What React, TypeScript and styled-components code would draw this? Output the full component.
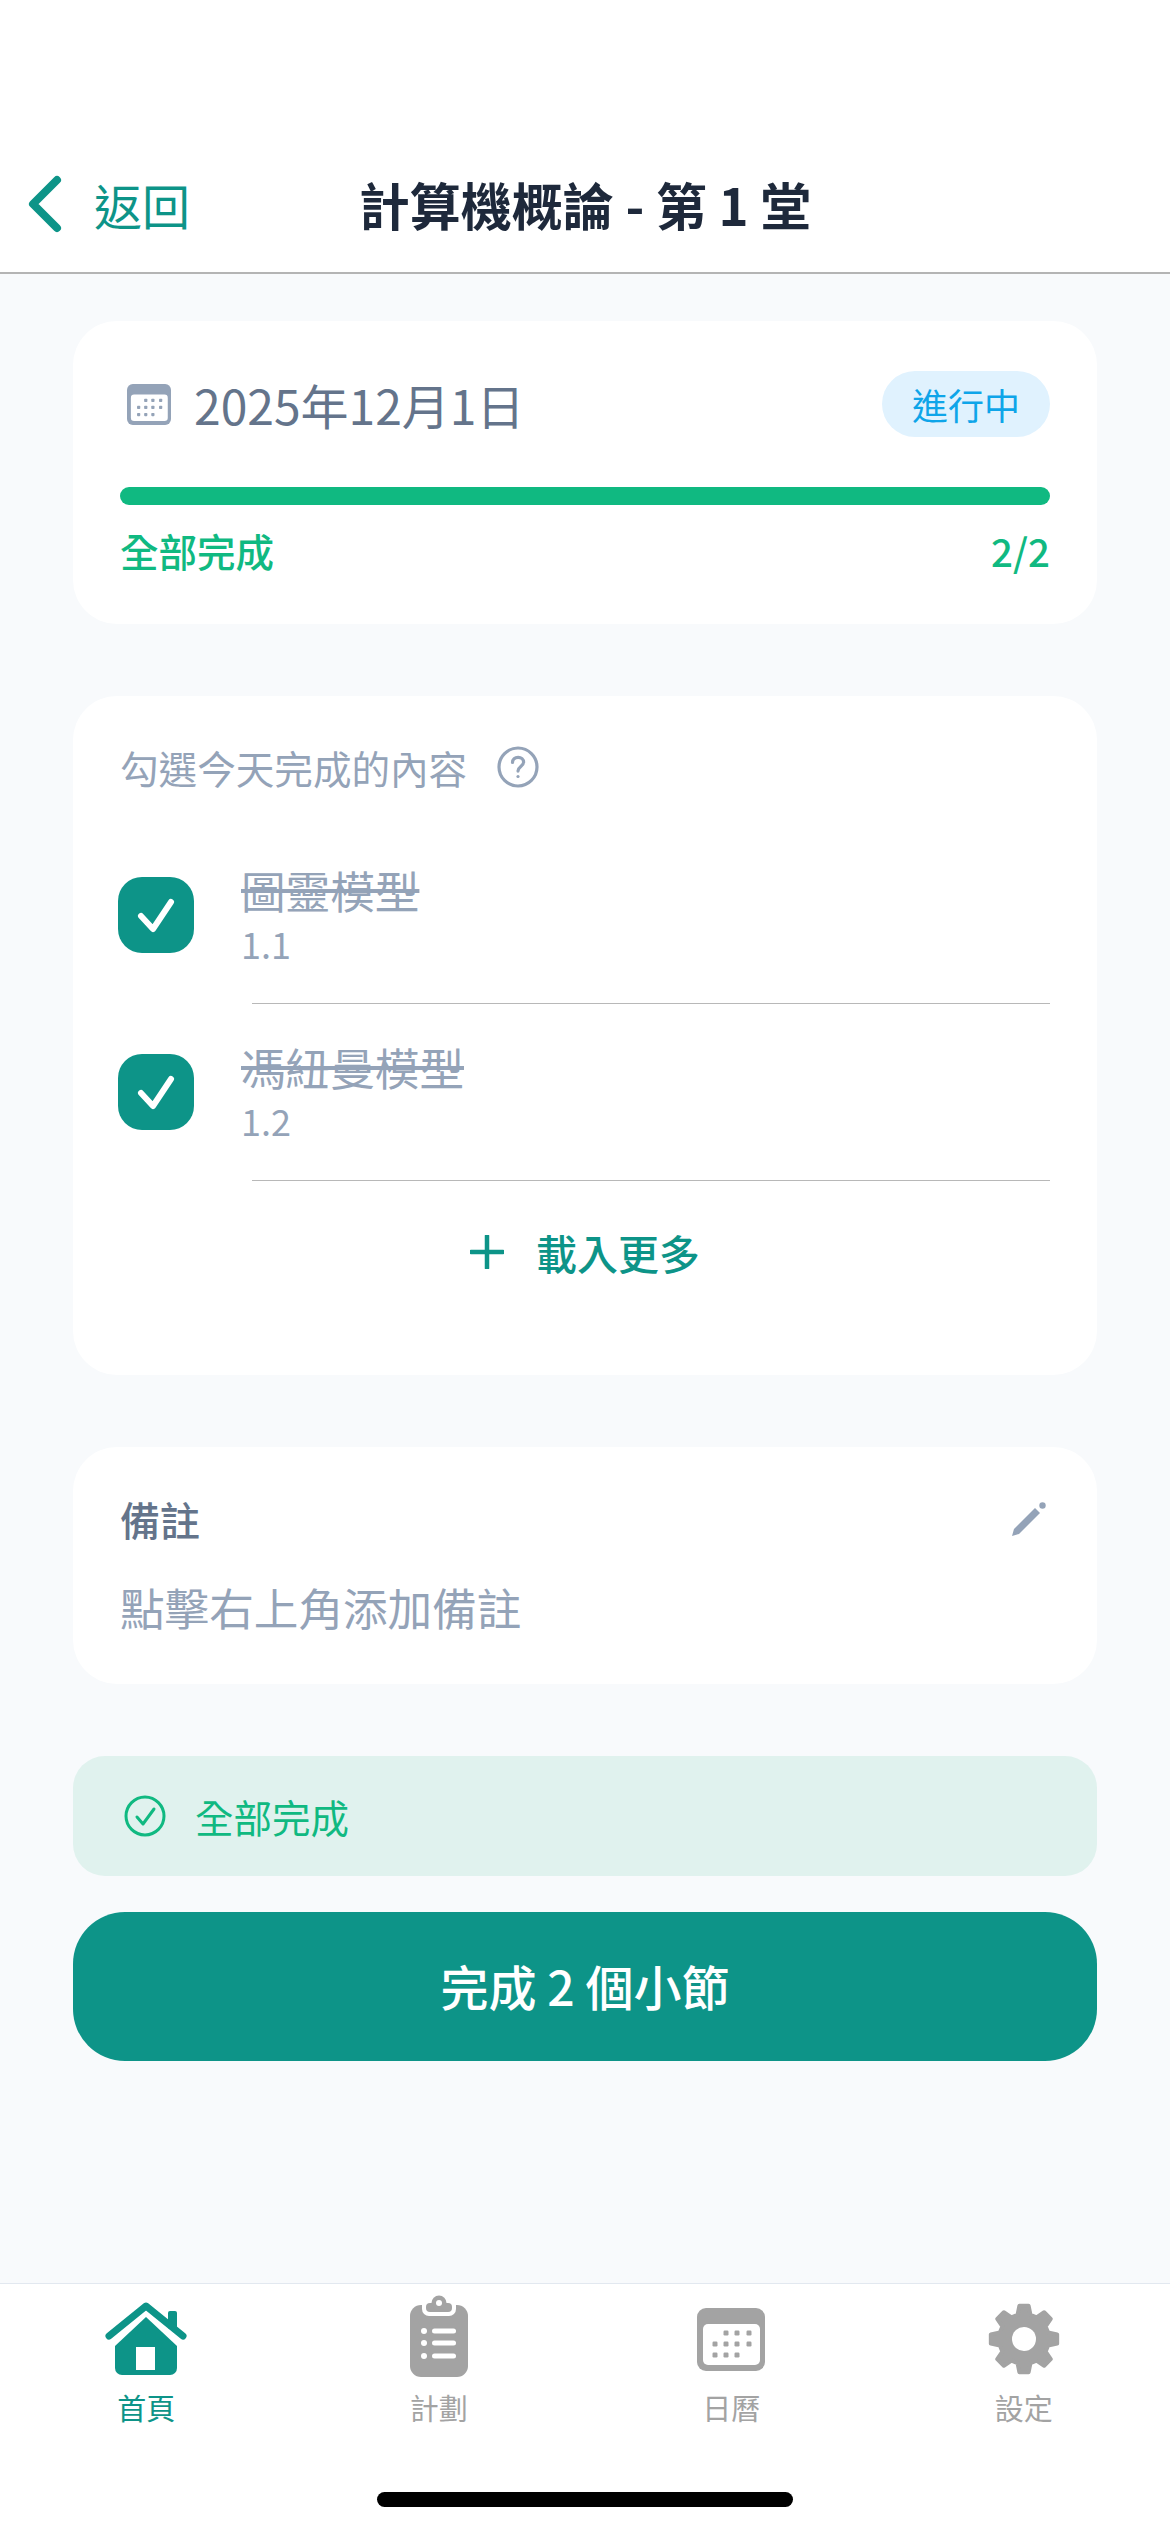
import React from "react";
import styled, { createGlobalStyle } from "styled-components";

const TEAL = "#0d9488";
const GREEN = "#10b981";
const SLATE = "#94a3b8";
const NAV_GREY = "#a3a3a3";

const GlobalStyle = createGlobalStyle`
  html, body {
    margin: 0;
    padding: 0;
    background: #f8fafc;
  }
  body {
    font-family: "Noto Sans CJK TC", "Noto Sans", sans-serif;
  }
  * {
    box-sizing: border-box;
  }
`;

const Page = styled.div`
  display: flex;
  flex-direction: column;
  width: 1170px;
  height: 2532px;
  overflow: hidden;
  background: #f8fafc;
`;

const Header = styled.header`
  display: grid;
  grid-template-columns: 1fr auto 1fr;
  align-items: center;
  height: 274px;
  padding-top: 136px;
  background: #fff;
  border-bottom: 2px solid #b4b4b4;
`;

const BackLink = styled.div`
  display: flex;
  align-items: center;
  gap: 32px;
  height: 132px;
  padding-left: 28px;
  font-size: 48px;
  color: ${TEAL};
`;

const Title = styled.h1`
  margin: 0;
  font-size: 51px;
  font-weight: 700;
  color: #1e293b;
`;

const Main = styled.main`
  flex: 1;
  display: flex;
  flex-direction: column;
  padding: 47px 73px 0;
`;

const Card = styled.section`
  background: #fff;
  border-radius: 44px;
  margin-bottom: 72px;
`;

const ProgressCard = styled(Card)`
  padding: 50px 47px 50px;
`;

const DateRow = styled.div`
  display: flex;
  align-items: center;
  justify-content: space-between;
  height: 66px;
`;

const DateLabel = styled.div`
  display: flex;
  align-items: center;
  gap: 23px;
  padding-left: 7px;
  font-size: 48px;
  color: #64748b;
`;

const Badge = styled.span`
  display: flex;
  align-items: center;
  justify-content: center;
  width: 168px;
  height: 66px;
  border-radius: 33px;
  background: #e0f2fe;
  color: #0ea5e9;
  font-size: 36px;
`;

const Track = styled.div`
  height: 18px;
  margin-top: 50px;
  border-radius: 9px;
  background: ${GREEN};
`;

const ProgressFoot = styled.div`
  display: flex;
  justify-content: space-between;
  margin-top: 21px;
  font-size: 38.5px;
  line-height: 48px;
  font-weight: 500;
  color: ${GREEN};
`;

const ChecklistCard = styled(Card)`
  padding: 48px 47px 90px;
`;

const ChecklistHead = styled.div`
  display: flex;
  align-items: center;
  gap: 30px;
  height: 46px;
  margin-bottom: 37px;
  font-size: 38.6px;
  color: ${SLATE};
`;

const Row = styled.div`
  display: flex;
  align-items: center;
  gap: 47px;
  height: 176px;
  margin-left: -2px;
`;

const CheckBox = styled.div`
  display: flex;
  width: 76px;
  height: 76px;
  border-radius: 24px;
  background: ${TEAL};
`;

const RowText = styled.div`
  display: flex;
  flex-direction: column;
  margin-top: -4px;
`;

const RowTitle = styled.div`
  font-size: 44.6px;
  line-height: 60px;
  color: ${SLATE};
  text-decoration: line-through;
`;

const RowSub = styled.div`
  font-size: 36px;
  line-height: 46px;
  color: ${SLATE};
`;

const Divider = styled.div`
  height: 1px;
  margin-left: 132px;
  background: #b8b8b8;
`;

const LoadMore = styled.div`
  display: flex;
  align-items: center;
  justify-content: center;
  gap: 32px;
  height: 60px;
  margin-top: 41px;
  margin-bottom: 3px;
  font-size: 41px;
  font-weight: 500;
  color: ${TEAL};
`;

const NoteCard = styled(Card)`
  padding: 44px 47px 47px;
`;

const NoteHead = styled.div`
  display: flex;
  align-items: center;
  justify-content: space-between;
  height: 56px;
  font-size: 40px;
  font-weight: 500;
  color: #64748b;
`;

const NoteHint = styled.div`
  margin-top: 30px;
  font-size: 44.6px;
  line-height: 60px;
  color: ${SLATE};
`;

const Banner = styled.div`
  display: flex;
  align-items: center;
  gap: 29px;
  height: 120px;
  padding-left: 51px;
  border-radius: 32px;
  background: #e0f2ee;
  font-size: 38.5px;
  color: ${GREEN};
`;

const SubmitButton = styled.button`
  height: 149px;
  margin-top: 36px;
  padding-bottom: 4px;
  border: 0;
  border-radius: 52px;
  background: ${TEAL};
  color: #fff;
  font-family: inherit;
  font-size: 48px;
  font-weight: 500;
`;

const BottomBar = styled.footer`
  display: flex;
  flex-direction: column;
  align-items: center;
  height: 249px;
  background: #fff;
  border-top: 1px solid #e2e8f0;
`;

const Tabs = styled.nav`
  display: grid;
  grid-template-columns: repeat(4, 1fr);
  width: 100%;
  padding-top: 11px;
`;

const Tab = styled.div<{ $active?: boolean }>`
  display: flex;
  flex-direction: column;
  align-items: center;
  color: ${({ $active }) => ($active ? TEAL : NAV_GREY)};
`;

const TabIcon = styled.div`
  display: flex;
  align-items: center;
  justify-content: center;
  height: 88px;
`;

const TabLabel = styled.div`
  margin-top: 10px;
  font-size: 29px;
  line-height: 29px;
`;

const HomeIndicator = styled.div`
  width: 416px;
  height: 15px;
  margin-top: 70px;
  border-radius: 8px;
  background: #000;
`;

const ChevronIcon = () => (
  <svg width="34" height="58" viewBox="0 0 34 58" fill="none">
    <path d="M29 5 5 29l24 24" stroke={TEAL} strokeWidth="8" strokeLinecap="round" strokeLinejoin="round" />
  </svg>
);

const CalendarIcon = ({ width, height, color }: { width: number; height: number; color: string }) => {
  const dots = [
    [29, 25], [40, 25], [52, 25],
    [18, 36], [29, 36], [40, 36], [52, 36],
    [18, 47], [29, 47], [40, 47],
  ];
  return (
    <svg width={width} height={height} viewBox="0 0 68 63">
      <rect width="68" height="63" rx="9" fill={color} />
      <rect x="6" y="16" width="57" height="41" rx="5" fill="#fff" />
      {dots.map(([x, y]) => (
        <rect key={`${x}-${y}`} x={x - 2.5} y={y - 2.5} width="5" height="5" rx="1.2" fill={color} />
      ))}
    </svg>
  );
};

const HelpIcon = () => (
  <svg width="42" height="42" viewBox="0 0 42 42" fill="none" stroke={SLATE} strokeWidth="3.2">
    <circle cx="21" cy="21" r="19" />
    <path d="M15.5 16.5c0-3.2 2.4-5.2 5.6-5.2s5.5 2 5.5 4.8c0 4.4-5.6 4.6-5.6 9" strokeLinecap="round" />
    <circle cx="21" cy="30.5" r="1.6" fill={SLATE} stroke="none" />
  </svg>
);

const CheckIcon = () => (
  <svg width="76" height="76" viewBox="0 0 76 76" fill="none">
    <path d="M23 39 35 52 53 25" stroke="#fff" strokeWidth="6" strokeLinecap="round" strokeLinejoin="round" />
  </svg>
);

const PlusIcon = () => (
  <svg width="34" height="34" viewBox="0 0 34 34" fill="none">
    <path d="M17 1v32M1 17h32" stroke={TEAL} strokeWidth="4.5" strokeLinecap="round" />
  </svg>
);

const PencilIcon = () => (
  <svg width="34" height="34" viewBox="0 0 34 34" style={{ marginRight: 4 }}>
    <path d="M0 34l2-7L23 6l5 5L7 32Z" fill={SLATE} />
    <circle cx="30.5" cy="3.5" r="3.2" fill={SLATE} />
  </svg>
);

const DoneIcon = () => (
  <svg width="42" height="42" viewBox="0 0 42 42" fill="none" stroke={GREEN} strokeWidth="3">
    <circle cx="21" cy="21" r="19" />
    <path d="M13 22l6 7 11-15" strokeLinecap="round" strokeLinejoin="round" />
  </svg>
);

const HomeIcon = () => (
  <svg width="82" height="74" viewBox="0 0 82 74">
    <path d="M10 44 41 15l31 29v22a7 7 0 0 1-7 7H17a7 7 0 0 1-7-7Z" fill={TEAL} />
    <rect x="31" y="45" width="19" height="23" fill="#fff" />
    <rect x="63" y="9" width="9" height="18" rx="2" fill={TEAL} />
    <path d="M4 34 41 4l37 30" fill="none" stroke={TEAL} strokeWidth="7" strokeLinecap="round" strokeLinejoin="round" />
  </svg>
);

const ClipboardIcon = () => (
  <svg width="58" height="88" viewBox="0 0 58 88">
    <rect y="10" width="58" height="72" rx="11" fill={NAV_GREY} />
    <rect x="12" y="0" width="34" height="21" rx="7" fill="#fff" />
    <rect x="16" y="8" width="26" height="9" rx="4" fill={NAV_GREY} />
    <circle cx="29" cy="8" r="7.5" fill={NAV_GREY} />
    <circle cx="29" cy="8" r="3" fill="#fff" />
    {[36, 48, 61].map((y) => (
      <g key={y} fill="#fff">
        <circle cx="14" cy={y} r="3" />
        <rect x="22" y={y - 2.5} width="24" height="5" rx="2.5" />
      </g>
    ))}
  </svg>
);

const GEAR_PATH = Array.from({ length: 8 }, (_, i) => {
  const at = (deg: number, r: number) => {
    const a = ((i * 45 + deg - 90) * Math.PI) / 180;
    return `${(36 + r * Math.cos(a)).toFixed(2)} ${(36 + r * Math.sin(a)).toFixed(2)}`;
  };
  return `${i ? "L" : "M"}${at(-15, 25)} L${at(-8, 33.5)} L${at(8, 33.5)} L${at(15, 25)}`;
}).join(" ") + " Z";

const GearIcon = () => (
  <svg width="72" height="72" viewBox="0 0 72 72">
    <path d={GEAR_PATH} fill={NAV_GREY} stroke={NAV_GREY} strokeWidth="4" strokeLinejoin="round" />
    <circle cx="36" cy="36" r="12" fill="#fff" />
  </svg>
);

const items = [
  { title: "圖靈模型", sub: "1.1" },
  { title: "馮紐曼模型", sub: "1.2" },
];

const tabs = [
  { label: "首頁", icon: <HomeIcon />, active: true },
  { label: "計劃", icon: <ClipboardIcon /> },
  { label: "日曆", icon: <CalendarIcon width={68} height={63} color={NAV_GREY} /> },
  { label: "設定", icon: <GearIcon /> },
];

const App = () => {
  return (
    <Page>
      <GlobalStyle />
      <Header>
        <BackLink>
          <ChevronIcon />
          <span>返回</span>
        </BackLink>
        <Title>計算機概論 - 第 1 堂</Title>
      </Header>
      <Main>
        <ProgressCard>
          <DateRow>
            <DateLabel>
              <CalendarIcon width={44} height={41} color={SLATE} />
              <span>2025年12月1日</span>
            </DateLabel>
            <Badge>進行中</Badge>
          </DateRow>
          <Track />
          <ProgressFoot>
            <span>全部完成</span>
            <span>2/2</span>
          </ProgressFoot>
        </ProgressCard>
        <ChecklistCard>
          <ChecklistHead>
            <span>勾選今天完成的內容</span>
            <HelpIcon />
          </ChecklistHead>
          {items.map((item) => (
            <React.Fragment key={item.sub}>
              <Row>
                <CheckBox>
                  <CheckIcon />
                </CheckBox>
                <RowText>
                  <RowTitle>{item.title}</RowTitle>
                  <RowSub>{item.sub}</RowSub>
                </RowText>
              </Row>
              <Divider />
            </React.Fragment>
          ))}
          <LoadMore>
            <PlusIcon />
            <span>載入更多</span>
          </LoadMore>
        </ChecklistCard>
        <NoteCard>
          <NoteHead>
            <span>備註</span>
            <PencilIcon />
          </NoteHead>
          <NoteHint>點擊右上角添加備註</NoteHint>
        </NoteCard>
        <Banner>
          <DoneIcon />
          <span>全部完成</span>
        </Banner>
        <SubmitButton>完成 2 個小節</SubmitButton>
      </Main>
      <BottomBar>
        <Tabs>
          {tabs.map((tab) => (
            <Tab key={tab.label} $active={tab.active}>
              <TabIcon>{tab.icon}</TabIcon>
              <TabLabel>{tab.label}</TabLabel>
            </Tab>
          ))}
        </Tabs>
        <HomeIndicator />
      </BottomBar>
    </Page>
  );
};

export default App;
